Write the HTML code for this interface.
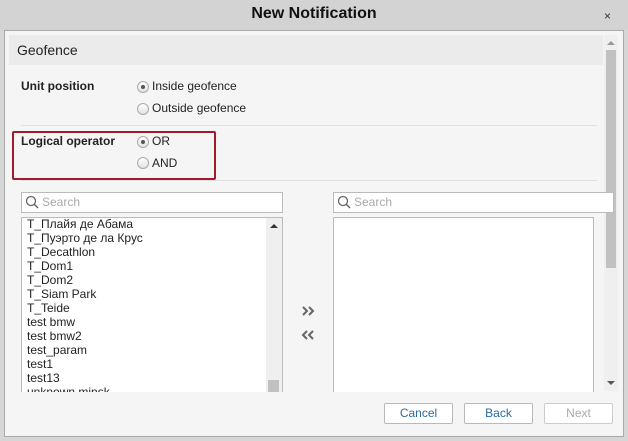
<!DOCTYPE html><html><head><style>
body{margin:0;width:628px;height:441px;background:#d6d6d6;font-family:"Liberation Sans",Arial,sans-serif;position:relative;overflow:hidden}
.a{position:absolute}
.t{font-size:12px;color:#222}
.rad{position:absolute;width:12px;height:12px;border:1px solid #aaa;border-radius:50%;background:linear-gradient(#fff,#e2e2e2);box-sizing:border-box}
.rad.on::after{content:"";position:absolute;left:3px;top:3px;width:4px;height:4px;border-radius:50%;background:#555}
.btn{position:absolute;top:403px;width:69px;height:21px;border:1px solid #b9b9b9;border-radius:2px;background:#fff;box-sizing:border-box;font-size:12px;text-align:center;line-height:19px;color:#2d6a9e}
.li{font-size:12px;color:#222;line-height:14px}
</style></head><body>
<div class="a" style="left:0;top:0;width:628px;height:30px;background:#d3d3d3"></div>
<div class="a" style="left:0;top:5px;width:628px;text-align:center;font-weight:bold;font-size:16px;color:#111">New Notification</div>
<div class="a" style="left:604px;top:9px;font-size:12px;color:#333">×</div>
<div class="a" style="left:4px;top:30px;width:620px;height:407px;background:#f5f5f5;border:1px solid #aaa;box-sizing:border-box"></div>
<div class="a" style="left:9px;top:35px;width:594px;height:30px;background:#ebebeb"></div>
<div class="a" style="left:17px;top:42px;font-size:14px;color:#222">Geofence</div>
<div class="a" style="left:604px;top:35px;width:14px;height:356px;background:#efefef"></div>
<div class="a" style="left:606px;top:50px;width:10px;height:218px;background:#c1c1c1"></div>
<div class="a" style="left:607px;top:41px;width:0;height:0;border-left:4px solid transparent;border-right:4px solid transparent;border-bottom:4px solid #999"></div>
<div class="a" style="left:607px;top:381px;width:0;height:0;border-left:4px solid transparent;border-right:4px solid transparent;border-top:4px solid #555"></div>
<div class="a t" style="left:21px;top:79px;font-weight:bold">Unit position</div>
<div class="rad on" style="left:137px;top:81px"></div><div class="a t" style="left:152px;top:79px">Inside geofence</div>
<div class="rad" style="left:137px;top:103px"></div><div class="a t" style="left:152px;top:101px">Outside geofence</div>
<div class="a" style="left:21px;top:125px;width:576px;height:1px;background:#e0e0e0"></div>
<div class="a" style="left:21px;top:180px;width:576px;height:1px;background:#e0e0e0"></div>
<div class="a" style="left:12px;top:131px;width:204px;height:49px;border:2px solid #a11b2b;border-radius:2px;box-sizing:border-box"></div>
<div class="a t" style="left:21px;top:134px;font-weight:bold">Logical operator</div>
<div class="rad on" style="left:137px;top:136px"></div><div class="a t" style="left:152px;top:134px">OR</div>
<div class="rad" style="left:137px;top:157px"></div><div class="a t" style="left:152px;top:156px">AND</div>
<div class="a" style="left:21px;top:192px;width:262px;height:21px;background:#fff;border:1px solid #bbb;box-sizing:border-box"></div>
<div class="a" style="left:333px;top:192px;width:281px;height:21px;background:#fff;border:1px solid #bbb;box-sizing:border-box"></div>
<svg class="a" style="left:25px;top:195px" width="14" height="14"><circle cx="6" cy="6" r="4.5" fill="none" stroke="#666" stroke-width="1.3"/><line x1="9.3" y1="9.3" x2="13" y2="13" stroke="#666" stroke-width="1.5"/></svg>
<svg class="a" style="left:337px;top:195px" width="14" height="14"><circle cx="6" cy="6" r="4.5" fill="none" stroke="#666" stroke-width="1.3"/><line x1="9.3" y1="9.3" x2="13" y2="13" stroke="#666" stroke-width="1.5"/></svg>
<div class="a" style="left:42px;top:195px;font-size:12px;color:#aaa">Search</div>
<div class="a" style="left:354px;top:195px;font-size:12px;color:#aaa">Search</div>
<div class="a" style="left:21px;top:217px;width:262px;height:176px;background:#fff;border:1px solid #bbb;border-bottom:none;box-sizing:border-box;overflow:hidden">
<div style="position:absolute;left:5px;top:-1px" class="li">T_Плайя де Абама<br>T_Пуэрто де ла Крус<br>T_Decathlon<br>T_Dom1<br>T_Dom2<br>T_Siam Park<br>T_Teide<br>test bmw<br>test bmw2<br>test_param<br>test1<br>test13<br>unknown minsk</div>
<div style="position:absolute;left:244px;top:0;width:16px;height:176px;background:#efefef"></div>
<div style="position:absolute;left:248px;top:6px;width:0;height:0;border-left:4px solid transparent;border-right:4px solid transparent;border-bottom:4px solid #333"></div>
<div style="position:absolute;left:246px;top:162px;width:11px;height:12px;background:#c1c1c1"></div>
</div>
<div class="a" style="left:333px;top:217px;width:261px;height:176px;background:#fff;border:1px solid #bbb;border-bottom:none;box-sizing:border-box"></div>
<svg class="a" style="left:300px;top:305px" width="18" height="40"><path d="M3 2l4 4-4 4M9 2l4 4-4 4" fill="none" stroke="#666" stroke-width="2"/><path d="M7 26l-4 4 4 4M13 26l-4 4 4 4" fill="none" stroke="#666" stroke-width="2"/></svg>
<div class="a" style="left:5px;top:392px;width:618px;height:44px;background:#f5f5f5"></div>
<div class="btn" style="left:384px">Cancel</div>
<div class="btn" style="left:464px">Back</div>
<div class="btn" style="left:544px;color:#aaa;border-color:#ccc">Next</div>
</body></html>
